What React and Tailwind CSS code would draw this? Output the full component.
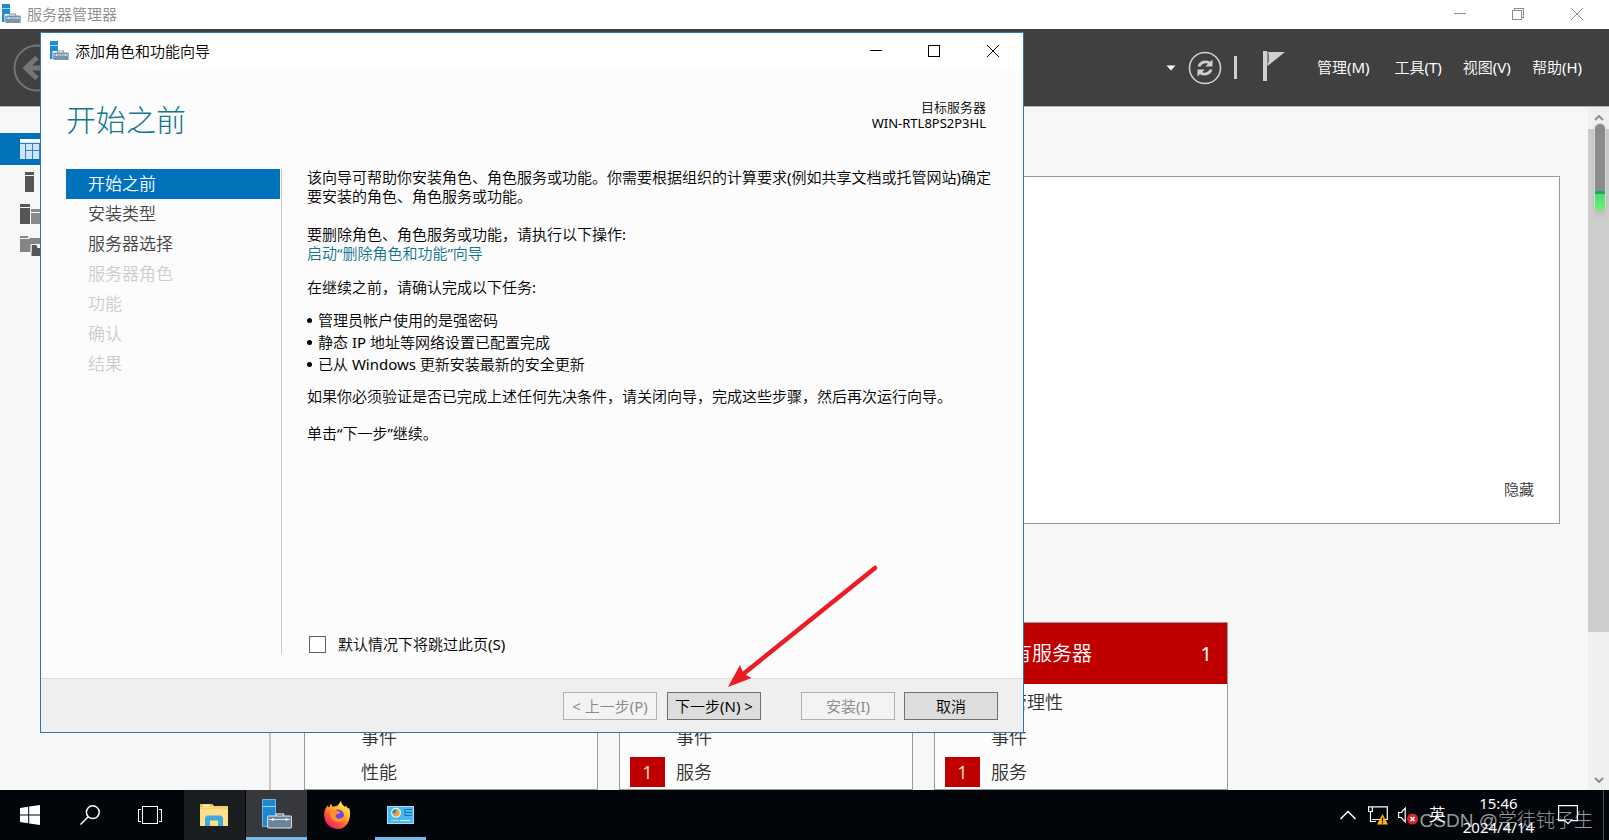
import React from "react";

const STEPS = [
  { label: "开始之前", state: "active" },
  { label: "安装类型", state: "enabled" },
  { label: "服务器选择", state: "enabled" },
  { label: "服务器角色", state: "disabled" },
  { label: "功能", state: "disabled" },
  { label: "确认", state: "disabled" },
  { label: "结果", state: "disabled" },
];

const STEP_STYLE = {
  active: "bg-[#0072bc] text-white",
  enabled: "text-[#444444]",
  disabled: "text-[#cccccc]",
};

const TASKS = [
  "管理员帐户使用的是强密码",
  "静态 IP 地址等网络设置已配置完成",
  "已从 Windows 更新安装最新的安全更新",
];

const CARDS = [
  { title: "本地服务器", rows: [["可管理性"], ["事件"], ["性能"]] },
  { title: "本地服务器", rows: [["可管理性"], ["事件"], ["服务", 1]] },
  { title: "所有服务器", rows: [["可管理性"], ["事件"], ["服务", 1]] },
];

function ServerLogo({ className }) {
  return (
    <svg viewBox="0 0 20 20" className={className} aria-hidden="true">
      <path d="M1 0h8v18H1z" fill="#1e8bd4" />
      <path d="M1 4.5h8" stroke="#a5d3f2" strokeWidth="1" />
      <path d="M3.5 10h16.500v9.500H3.500z" fill="#fff" />
      <path d="M8.500 11.500V10h6v1.500" fill="none" stroke="#7d98ab" strokeWidth="1.200" />
      <rect x="4.200" y="11.500" width="15.500" height="7.500" rx="1" fill="#7796ab" />
      <path d="M5 14h14M7.500 13v2M16.500 13v2" stroke="#dce7ee" strokeWidth="0.900" />
    </svg>
  );
}

function Minimize() {
  return (
    <svg viewBox="0 0 12 12" className="size-3" fill="none" stroke="currentColor" shapeRendering="crispEdges" aria-hidden="true">
      <path d="M0 5.500h12" />
    </svg>
  );
}

function Maximize() {
  return (
    <svg viewBox="0 0 12 12" className="size-3" fill="none" stroke="currentColor" shapeRendering="crispEdges" aria-hidden="true">
      <path d="M.5.5h11v11H.5z" />
    </svg>
  );
}

function Restore() {
  return (
    <svg viewBox="0 0 12 12" className="size-3" fill="none" stroke="currentColor" shapeRendering="crispEdges" aria-hidden="true">
      <path d="M.5 2.500h9v9h-9zM2.500 2.500v-2h9v9h-2" />
    </svg>
  );
}

function Close() {
  return (
    <svg viewBox="0 0 12 12" className="size-3" fill="none" stroke="currentColor" aria-hidden="true">
      <path d="M0 0l12 12M12 0L0 12" />
    </svg>
  );
}

function WindowButtons({ maximized, className }) {
  return (
    <div className={className}>
      <button type="button" aria-label="最小化" className="flex w-[58px] items-center justify-center"><Minimize /></button>
      <button type="button" aria-label={maximized ? "还原" : "最大化"} className="flex w-[58px] items-center justify-center">
        {maximized ? <Restore /> : <Maximize />}
      </button>
      <button type="button" aria-label="关闭" className="flex w-[60px] items-center justify-center"><Close /></button>
    </div>
  );
}

function HeaderBar() {
  return (
    <div className="flex h-[78px] shrink-0 items-center border-b border-[#b4b4b4] bg-[#404040] pl-[13px] pr-[27px] text-white">
      <button type="button" aria-label="后退">
        <svg viewBox="0 0 48 48" className="size-12" fill="none" stroke="#757575" aria-hidden="true">
          <circle cx="24" cy="24" r="22.500" strokeWidth="2" />
          <path d="M36 24H13M24 13.500L13 24l11 10.500" strokeWidth="5" />
        </svg>
      </button>
      <button type="button" aria-label="历史记录" className="ml-auto">
        <svg viewBox="0 0 10 6" className="h-[6px] w-[10px]" aria-hidden="true"><path d="M.5.500h9L5 5.500z" fill="#fff" /></svg>
      </button>
      <button type="button" aria-label="刷新" className="ml-3">
        <svg viewBox="0 0 34 34" className="size-[34px]" fill="none" stroke="#cfcfcf" aria-hidden="true">
          <circle cx="17" cy="17" r="15.500" strokeWidth="1.600" />
          <path d="M11 15.500c1.200-4.800 7.800-6 11.300-2.800M23 18.500c-1.200 4.800-7.800 6-11.300 2.800" strokeWidth="2.800" />
          <path d="M24.500 8.500v7h-7.300zM9.500 25.500v-7h7.300z" fill="#cfcfcf" stroke="none" />
        </svg>
      </button>
      <span className="ml-3 h-[23px] w-[3px] bg-[#cfcfcf]" />
      <button type="button" aria-label="通知" className="ml-[26px] pb-1">
        <svg viewBox="0 0 22 30" className="h-[30px] w-[22px]" aria-hidden="true">
          <path d="M0 0h4v30H0z" fill="#cfcfcf" />
          <path d="M4.500 1H22L4.500 15z" fill="#cfcfcf" />
          <path d="M5.500 2.500v9" stroke="#777" />
        </svg>
      </button>
      <nav className="ml-8 flex gap-[21px] pb-[2px] text-[15px] leading-5">
        <button type="button" className="mr-1">管理(M)</button>
        <button type="button">工具(T)</button>
        <button type="button">视图(V)</button>
        <button type="button">帮助(H)</button>
      </nav>
    </div>
  );
}

function SideBar() {
  return (
    <div className="flex w-[271px] shrink-0 flex-col border-r-2 border-[#c8c8c8] pt-[26px]">
      <button type="button" aria-label="仪表板" className="mb-px flex h-8 items-center bg-[#0072bc] pl-5">
        <svg viewBox="0 0 24 20" className="h-5 w-6" aria-hidden="true">
          <path d="M0 0h24v20H0z" fill="#cfe4f4" />
          <path d="M0 0h24v3H0z" fill="#fff" />
          <path d="M0 4.500h24M5.500 4v16M12.500 4v16M19.500 4v16M5.500 11.500H24" stroke="#2a86c6" />
        </svg>
      </button>
      <button type="button" aria-label="本地服务器" className="flex h-8 items-center pl-[25px]">
        <svg viewBox="0 0 9 20" className="h-5 w-[9px]" fill="#565656" aria-hidden="true"><path d="M0 0h9v3H0zM0 4h9v16H0z" /></svg>
      </button>
      <button type="button" aria-label="所有服务器" className="flex h-8 items-center pl-5">
        <svg viewBox="0 0 22 20" className="h-5 w-[22px]" aria-hidden="true">
          <path d="M0 0h10v3H0zM0 4h10v16H0z" fill="#565656" />
          <path d="M11 5h11v3H11zM11 9h11v11H11z" fill="#8a8a8a" />
        </svg>
      </button>
      <button type="button" aria-label="文件和存储服务" className="flex h-8 items-center pl-5">
        <svg viewBox="0 0 22 20" className="h-5 w-[22px]" aria-hidden="true">
          <path d="M0 0h8v2H0zM0 3h9l1-1h10v6h-9v8H0z" fill="#858585" />
          <path d="M11.500 9h5l1 3H22v8H11.500z" fill="#565656" />
          <path d="M11 16V8.500h6l1 2.500" fill="none" stroke="#f7f7f7" />
        </svg>
      </button>
    </div>
  );
}

function Card({ title, rows }) {
  return (
    <section className="w-[294px] shrink-0 border border-[#999999] bg-[#fcfcfc]">
      <h3 className="flex h-[61px] items-center justify-between bg-[#c00000] pl-[57px] pr-[15px] text-[20px] text-white">
        <span>{title}</span>
        <span>1</span>
      </h3>
      <ul className="flex flex-col gap-[5px] pt-[3px] text-[18px] text-[#333333]">
        {rows.map(([label, count]) => (
          <li key={label} className="flex h-[30px] items-center gap-[11px] pl-[10px]">
            <span className={count ? "flex h-[30px] w-[35px] items-center justify-center bg-[#c00000] text-[#ffd9c0]" : "w-[35px]"}>{count}</span>
            <span>{label}</span>
          </li>
        ))}
      </ul>
    </section>
  );
}

function ScrollBar() {
  return (
    <div className="relative flex w-[21px] shrink-0 flex-col bg-[#f0f0f0]">
      <div className="flex h-[22px] items-center justify-center">
        <svg viewBox="0 0 10 6" className="h-[6px] w-[10px]" fill="none" stroke="#8c8c8c" strokeWidth="2" aria-hidden="true"><path d="M1 5l4-4 4 4" /></svg>
      </div>
      <div className="h-[503px] bg-[#cdcdcd]" />
      <div className="mt-auto flex h-[20px] items-center justify-center">
        <svg viewBox="0 0 10 6" className="h-[6px] w-[10px]" fill="none" stroke="#8c8c8c" strokeWidth="2" aria-hidden="true"><path d="M1 1l4 4 4-4" /></svg>
      </div>
      <div className="absolute right-[3px] top-4 flex h-[89px] w-3 flex-col overflow-hidden rounded-full border border-[#d8d8d8] bg-[#8b8b8b] shadow-md">
        <div className="mt-auto h-[20px] border-t-[3px] border-[#22a861] bg-linear-to-b from-[#4fdc6c] to-[#6ff07f]" />
      </div>
    </div>
  );
}

const WIZARD_BUTTON = "h-7 w-[94px] border text-[15px] leading-5 whitespace-nowrap border-[#707070] bg-[#dddddd] text-black disabled:border-[#b2b2b2] disabled:bg-[#f3f3f3] disabled:text-[#8a8a8a]";

function Wizard() {
  return (
    <div role="dialog" aria-labelledby="wizard-title" className="absolute left-10 top-8 flex min-h-[701px] w-[984px] max-w-[calc(100%-40px)] flex-col border border-[#2c78b4] bg-[#fcfcfc] text-black">
      <div className="flex h-[37px] items-stretch bg-white pb-[2px] pl-2">
        <ServerLogo className="mt-2 size-5" />
        <span id="wizard-title" className="ml-[6px] self-center text-[15px] leading-5">添加角色和功能向导</span>
        <WindowButtons className="ml-auto flex" />
      </div>
      <div className="flex justify-between pl-[25px] pr-[37px] pt-[26px]">
        <h1 className="font-['Noto_Sans_CJK_SC',sans-serif] text-[30px] leading-[44px] font-light text-[#14758f]">开始之前</h1>
        <div className="pt-[3px] text-right text-[13px] leading-4">
          <p>目标服务器</p>
          <p>WIN-RTL8PS2P3HL</p>
        </div>
      </div>
      <div className="mb-6 flex grow pl-[25px] pt-7">
        <nav className="mt-px w-[216px] shrink-0 border-r border-[#c8c8c8] pr-[1px]">
          <ol>
            {STEPS.map((s) => (
              <li key={s.label}>
                <button
                  type="button"
                  disabled={s.state === "disabled"}
                  aria-current={s.state === "active" ? "step" : undefined}
                  className={"block h-[30px] w-full pl-[22px] text-left text-[17px] leading-[30px] " + STEP_STYLE[s.state]}
                >
                  {s.label}
                </button>
              </li>
            ))}
          </ol>
        </nav>
        <div className="flex flex-col pl-[25px] pr-[26px] text-[15px] leading-[19px]">
          <p>该向导可帮助你安装角色、角色服务或功能。你需要根据组织的计算要求(例如共享文档或托管网站)确定要安装的角色、角色服务或功能。</p>
          <p className="mt-[19px]">要删除角色、角色服务或功能，请执行以下操作:</p>
          <a href="#remove" className="self-start text-[#14758f]">启动“删除角色和功能”向导</a>
          <p className="mt-[15px]">在继续之前，请确认完成以下任务:</p>
          <ul className="mt-3 leading-[22px]">
            {TASKS.map((t) => (
              <li key={t} className="flex items-center gap-[6px]">
                <span className="size-[5px] rounded-full bg-black" />
                {t}
              </li>
            ))}
          </ul>
          <p className="mt-3">如果你必须验证是否已完成上述任何先决条件，请关闭向导，完成这些步骤，然后再次运行向导。</p>
          <p className="mt-[18px]">单击“下一步”继续。</p>
          <label className="mt-auto flex items-center gap-3 pl-[2px]">
            <input type="checkbox" className="size-[17px] appearance-none border border-[#606060] bg-white checked:bg-[#0072bc]" />
            默认情况下将跳过此页(S)
          </label>
        </div>
      </div>
      <div className="flex h-[54px] items-center justify-end border-t border-[#dfdfdf] bg-[#efefef] pr-[25px]">
        <button type="button" disabled className={WIZARD_BUTTON}>&lt; 上一步(P)</button>
        <button type="button" className={WIZARD_BUTTON + " ml-[10px]"}>下一步(N) &gt;</button>
        <button type="button" disabled className={WIZARD_BUTTON + " ml-10"}>安装(I)</button>
        <button type="button" className={WIZARD_BUTTON + " ml-[9px]"}>取消</button>
      </div>
      <svg viewBox="0 0 150 122" className="pointer-events-none absolute left-[687px] top-[532px] h-[122px] w-[150px]" aria-hidden="true">
        <path d="M147 3L14 110" stroke="#ec1c24" strokeWidth="4.500" strokeLinecap="round" />
        <path d="M0 122L12 100l3.500 8.500 8 4.500z" fill="#ec1c24" />
      </svg>
    </div>
  );
}

function TaskBar() {
  return (
    <footer className="relative flex h-[50px] shrink-0 items-stretch bg-[#020509] text-white">
      <button type="button" aria-label="开始" className="flex w-[60px] items-center justify-center">
        <svg viewBox="0 0 20 20" className="size-5" fill="#fff" aria-hidden="true"><path d="M0 3l8.200-1.200v7.700H0zM9.200 1.600L20 0v9.500H9.200zM0 10.500h8.200v7.700L0 17zM9.200 10.500H20V20L9.200 18.400z" /></svg>
      </button>
      <button type="button" aria-label="搜索" className="flex w-[60px] items-center justify-center">
        <svg viewBox="0 0 20 20" className="size-5" fill="none" stroke="#fff" strokeWidth="1.500" aria-hidden="true"><circle cx="12.800" cy="7.200" r="6.400" /><path d="M8.200 11.800L.5 19.500" /></svg>
      </button>
      <button type="button" aria-label="任务视图" className="flex w-[60px] items-center justify-center">
        <svg viewBox="0 0 24 18" className="h-[18px] w-6" fill="none" stroke="#fff" shapeRendering="crispEdges" aria-hidden="true"><path d="M4.500.5h15v17h-15zM3 3.500H.5v12H3M21 3.500h2.500v12H21" /></svg>
      </button>
      <button type="button" aria-label="文件资源管理器" className="ml-1 flex w-[61px] items-center justify-center bg-[#1b1e21] pr-[2px]">
        <svg viewBox="0 0 28 24" className="h-6 w-7" aria-hidden="true">
          <path d="M0 1h12l2 2h14v20H0z" fill="#ffe08a" />
          <path d="M0 1h12v3H0z" fill="#f5bf3a" />
          <path d="M3 1.500h7v2H3z" fill="#fff3c8" />
          <path d="M28 3H14l-2 2H0v1h28z" fill="#f1cf70" />
          <path d="M5 14.500l2-2h14l2 2V23h-5v-5.500h-8V23H5z" fill="#3cabdc" />
        </svg>
      </button>
      <button type="button" aria-label="服务器管理器" className="ml-px flex w-[61px] flex-col items-center bg-[#37383c]">
        <span className="flex grow items-center">
          <svg viewBox="0 0 30 30" className="size-[30px]" aria-hidden="true">
            <path d="M.5.500h13v27H.5z" fill="#1f87d2" stroke="#69b6ea" />
            <path d="M.5 7.500h13" stroke="#a9d8f7" />
            <path d="M14.500 17v-2h7v2" fill="none" stroke="#b9c9d5" strokeWidth="1.500" />
            <rect x="5.600" y="17" width="24" height="12" rx="1" fill="#68859a" stroke="#e0e8ee" />
            <path d="M7 20.500h21" stroke="#e0e8ee" />
            <circle cx="11" cy="20.500" r="1.200" fill="#fff" /><circle cx="24.500" cy="20.500" r="1.200" fill="#fff" />
          </svg>
        </span>
        <span className="h-[3px] w-full bg-[#76b9ed]" />
      </button>
      <button type="button" aria-label="Firefox" className="flex w-[61px] items-center justify-center">
        <svg viewBox="0 0 28 28" className="size-7" aria-hidden="true">
          <defs>
            <linearGradient id="fx" x1="0.850" y1="0.100" x2="0.250" y2="1"><stop offset="0" stopColor="#fff04a" /><stop offset=".35" stopColor="#ffb52a" /><stop offset=".65" stopColor="#ff5a36" /><stop offset="1" stopColor="#ef1670" /></linearGradient>
          </defs>
          <path d="M3.500 4.500l1.500 2 2-4 1.500 3.200 5-1 3.500-4.700c.4 3 2.200 4 4 6l1-1.500c.6 1.500 1.300 2 2 3l1.200-.5c2.800 8-.8 21-11.200 21C4 28-1.500 19 .6 10c.6-2.500 2-3.500 2.900-5.500z" fill="url(#fx)" />
          <circle cx="14" cy="14.500" r="6" fill="#7542e5" />
          <path d="M7 8c3-1 5 .5 6 2 2 .2 3 .6 3.500 1.200-1 1.600-3.500 1.300-4.500 2.800-1 2 1 4 3 3.800 3-.2 4-2.300 6-2.800-.5 4-3.500 6-7 6-5.500 0-9-5-7-13z" fill="#ff9032" />
        </svg>
      </button>
      <button type="button" aria-label="控制面板" className="ml-[7px] flex w-[51px] flex-col items-center">
        <span className="flex grow items-center pt-[3px]">
          <svg viewBox="0 0 27 18" className="h-[18px] w-[27px]" aria-hidden="true">
            <path d="M0 0h27v18H0z" fill="#9be0fb" />
            <path d="M1 1h25v16H1z" fill="#47b9ee" />
            <circle cx="9" cy="6.800" r="5" fill="#e9f7fd" />
            <path d="M9 6.800V3a3.800 3.800 0 1 1-3.600 5z" fill="#f0a030" />
            <path d="M9 6.800V3a3.800 3.800 0 0 0-3.600 5z" fill="#2583c5" />
            <path d="M18 3.500h7M18 6.500h7M18 9.500h7M18 3v7" stroke="#1d74b4" fill="none" />
            <path d="M4 14.500h8" stroke="#b7d89a" /><path d="M13 14.500h10" stroke="#e6f6fd" />
          </svg>
        </span>
        <span className="h-[3px] w-full bg-[#76b9ed]" />
      </button>

      <div className="ml-auto flex items-center pr-[5px]">
        <button type="button" aria-label="显示隐藏的图标">
          <svg viewBox="0 0 16 10" className="h-[10px] w-4" fill="none" stroke="#fff" strokeWidth="1.500" aria-hidden="true"><path d="M.5 9L8 1.500 15.500 9" /></svg>
        </button>
        <button type="button" aria-label="网络" className="ml-3">
          <svg viewBox="0 0 20 19" className="h-[19px] w-5" fill="none" stroke="#fff" aria-hidden="true">
            <path d="M5 .8h14.300v12.700H4M2.500 6v9.500H8" strokeWidth="1.200" /><path d="M.6.8h3.800v4.700H.6z" fill="#020509" strokeWidth="1.200" />
            <path d="M14.500 8L20 18.500H9z" fill="#fdb813" stroke="none" /><path d="M14.500 11.500v4M14.500 16.300v1.200" stroke="#111" strokeWidth="1.200" />
          </svg>
        </button>
        <button type="button" aria-label="音量" className="ml-[10px]">
          <svg viewBox="0 0 21 19" className="h-[19px] w-[21px]" fill="none" stroke="#fff" aria-hidden="true">
            <path d="M.6 6.500h2.800l3.800-4.300v13.600L3.400 11.500H.6z" strokeWidth="1.200" />
            <circle cx="14.500" cy="13" r="5.500" fill="#d9272e" stroke="none" /><path d="M12.500 11l4 4M16.500 11l-4 4" strokeWidth="1.500" />
          </svg>
        </button>
        <button type="button" aria-label="输入法" className="ml-[10px] text-[17px] leading-5">英</button>
        <button type="button" className="ml-[17px] text-[15px] leading-[24px]">
          <span className="block">15:46</span>
          <span className="block">2024/4/14</span>
        </button>
        <button type="button" aria-label="通知中心" className="ml-6">
          <svg viewBox="0 0 20 20" className="size-5" fill="none" stroke="#fff" strokeWidth="1.200" aria-hidden="true"><path d="M.6.600h18.800v15H13l-3 3-3-3H.600z" /></svg>
        </button>
        <span className="ml-[25px] h-[50px] w-px bg-[#4a4d50]" />
      </div>
      <span className="pointer-events-none absolute right-4 top-[17px] whitespace-nowrap font-['Liberation_Sans','Noto_Sans_CJK_SC',sans-serif] text-[19px] leading-7 font-light text-white/60">CSDN @学徒钝子生</span>
    </footer>
  );
}

export default function App() {
  return (
    <div className="relative flex h-screen min-h-[800px] w-full flex-col overflow-hidden bg-[#f7f7f7] font-['Noto_Sans','Noto_Sans_CJK_SC_DemiLight','Noto_Sans_CJK_SC',sans-serif]" lang="zh-CN">
      <header className="flex h-[29px] shrink-0 items-stretch bg-white pb-px pl-px pr-[2px] text-[#8c8c8c]">
        <ServerLogo className="mt-1 size-5" />
        <span className="ml-[6px] self-center text-[15px] leading-5">服务器管理器</span>
        <WindowButtons maximized className="ml-auto flex" />
      </header>
      <HeaderBar />
      <div className="flex min-h-0 flex-1">
        <SideBar />
        <main className="flex min-w-0 grow flex-col overflow-hidden pl-[33px] pr-7 pt-[69px]">
          <section className="flex h-[348px] shrink-0 items-end justify-end border border-[#999999] bg-white pb-[24px] pr-[25px]">
            <button type="button" className="text-[15px] leading-5 text-[#333333]">隐藏</button>
          </section>
          <div className="mt-[98px] flex grow gap-[21px]">
            {CARDS.map((c, i) => <Card key={i} {...c} />)}
          </div>
        </main>
        <ScrollBar />
      </div>
      <Wizard />
      <TaskBar />
    </div>
  );
}
